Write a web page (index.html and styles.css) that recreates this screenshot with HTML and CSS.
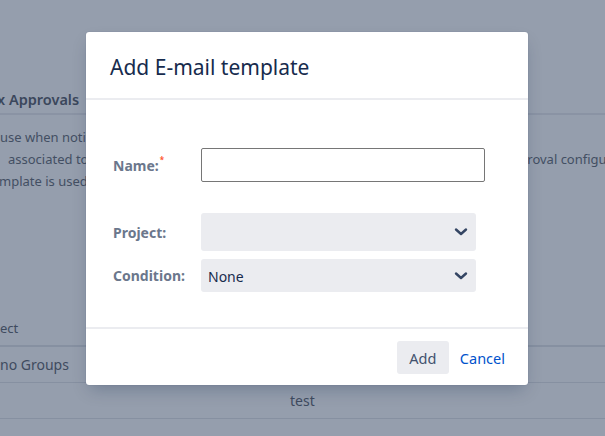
FILE: index.html
```html
<!DOCTYPE html>
<html>
<head>
<meta charset="utf-8">
<link rel="stylesheet" href="styles.css">
</head>
<body>
<div class="page">
  <div class="content">
    <h2 class="section-title">x Approvals</h2>
    <div class="desc">
      <p class="l1">use when notifying approvers</p>
      <p class="l2"><span class="head">associated to a project and</span><span class="tail">approval configuration</span></p>
      <p class="l3">mplate is used for the notification</p>
    </div>
    <div class="table">
      <div class="thead">ect</div>
      <div class="trow">no Groups</div>
      <div class="trow trow-center">test</div>
    </div>
  </div>
</div>

<div class="modal">
  <div class="modal-header">
    <h1 class="modal-title">Add E-mail template</h1>
  </div>
  <div class="modal-body">
    <div class="field field-name">
      <label class="label">Name:<span class="req">*</span></label>
      <input class="text-input" type="text">
    </div>
    <div class="field field-project">
      <label class="label">Project:</label>
      <div class="select select-tall">
        <span class="select-value"></span>
        <svg class="chev" width="14" height="10" viewBox="0 0 14 10"><path d="M2 2.5 L7 7 L12 2.5" fill="none" stroke="#344563" stroke-width="2.4" stroke-linecap="round" stroke-linejoin="round"/></svg>
      </div>
    </div>
    <div class="field field-condition">
      <label class="label">Condition:</label>
      <div class="select">
        <span class="select-value">None</span>
        <svg class="chev" width="14" height="10" viewBox="0 0 14 10"><path d="M2 2.5 L7 7 L12 2.5" fill="none" stroke="#344563" stroke-width="2.4" stroke-linecap="round" stroke-linejoin="round"/></svg>
      </div>
    </div>
  </div>
  <div class="modal-footer">
    <button class="btn btn-add">Add</button>
    <button class="btn btn-link">Cancel</button>
  </div>
</div>
</body>
</html>
```
FILE: styles.css
```css
html, body {
  margin: 0;
  padding: 0;
}
body {
  width: 605px;
  height: 436px;
  overflow: hidden;
  background: #959ead;
  font-family: "Noto Sans", "Open Sans", sans-serif;
  position: relative;
}
.page {
  width: 605px;
  height: 436px;
  overflow: hidden;
}
.content {
  padding-top: 86px;
  width: 605px;
  color: #3f4b5f;
  white-space: nowrap;
}
.section-title {
  margin: 0;
  text-indent: -3px;
  font-size: 14.5px;
  font-weight: 600;
  line-height: 26px;
  color: #3b475c;
  padding-bottom: 1px;
  border-bottom: 2px solid #8a93a4;
}
.desc {
  padding-top: 11px;
  font-size: 13px;
  color: #434f63;
}
.desc p {
  margin: 0;
  line-height: 22px;
}
.desc .l2 {
  display: flex;
  padding-left: 8px;
}
.desc .l2 .head {
  flex: 0 0 496px;
  overflow: hidden;
}
.desc .l3 {
  margin-left: -1px;
}
.table {
  margin-top: 119px;
  font-size: 14px;
}
.thead {
  line-height: 34px;
  font-size: 13px;
  border-bottom: 2px solid #8690a1;
}
.trow {
  line-height: 35px;
  border-bottom: 1px solid #8690a1;
}
.trow-center {
  padding-left: 290px;
}

/* modal */
.modal {
  position: absolute;
  left: 86px;
  top: 32px;
  width: 442px;
  height: 353px;
  background: #fff;
  border-radius: 3px;
  box-shadow: 0 8px 16px -4px rgba(9, 30, 66, 0.25), 0 0 1px rgba(9, 30, 66, 0.31);
  display: flex;
  flex-direction: column;
}
.modal-header {
  height: 66px;
  border-bottom: 2px solid #ebecf0;
  padding: 0 24px;
  display: flex;
  align-items: center;
}
.modal-title {
  margin: 0;
  font-size: 21px;
  font-weight: 400;
  color: #172b4d;
  padding-top: 3px;
}
.modal-body {
  flex: 1;
  padding: 48px 0 0 27px;
}
.field {
  display: flex;
  align-items: center;
}
.label {
  width: 88px;
  font-size: 14px;
  font-weight: 700;
  color: #6b778c;
}
.req {
  color: #ff5630;
  font-size: 8px;
  position: relative;
  top: -8px;
  left: 1px;
}
.text-input {
  box-sizing: border-box;
  width: 284px;
  height: 34px;
  border: 1px solid #767676;
  border-radius: 2px;
  margin: 0;
  padding: 0 6px;
  font-family: inherit;
}
.field-project {
  margin-top: 31px;
}
.field-condition {
  margin-top: 8px;
}
.select {
  box-sizing: border-box;
  width: 275px;
  height: 33px;
  background: #ebecf0;
  border-radius: 3px;
  display: flex;
  align-items: center;
  justify-content: space-between;
  padding: 0 8px 0 7px;
}
.select-tall {
  height: 38px;
}
.select-value {
  font-size: 14px;
  color: #172b4d;
  padding-top: 1px;
}
.chev {
  display: block;
}
.modal-footer {
  border-top: 2px solid #ebecf0;
  height: 58px;
  box-sizing: border-box;
  padding: 12px 23px 0 0;
  display: flex;
  justify-content: flex-end;
  align-items: flex-start;
  gap: 3px;
}
.btn {
  font-family: inherit;
  font-size: 14px;
  border: 0;
  border-radius: 3px;
  margin: 0;
  height: 33px;
  cursor: pointer;
}
.btn-add {
  width: 52px;
  background: #ebecf0;
  color: #42526e;
  font-size: 14.5px;
}
.btn-link {
  background: transparent;
  color: #0052cc;
  font-size: 14.5px;
  padding: 0 0 0 8px;
}
```
